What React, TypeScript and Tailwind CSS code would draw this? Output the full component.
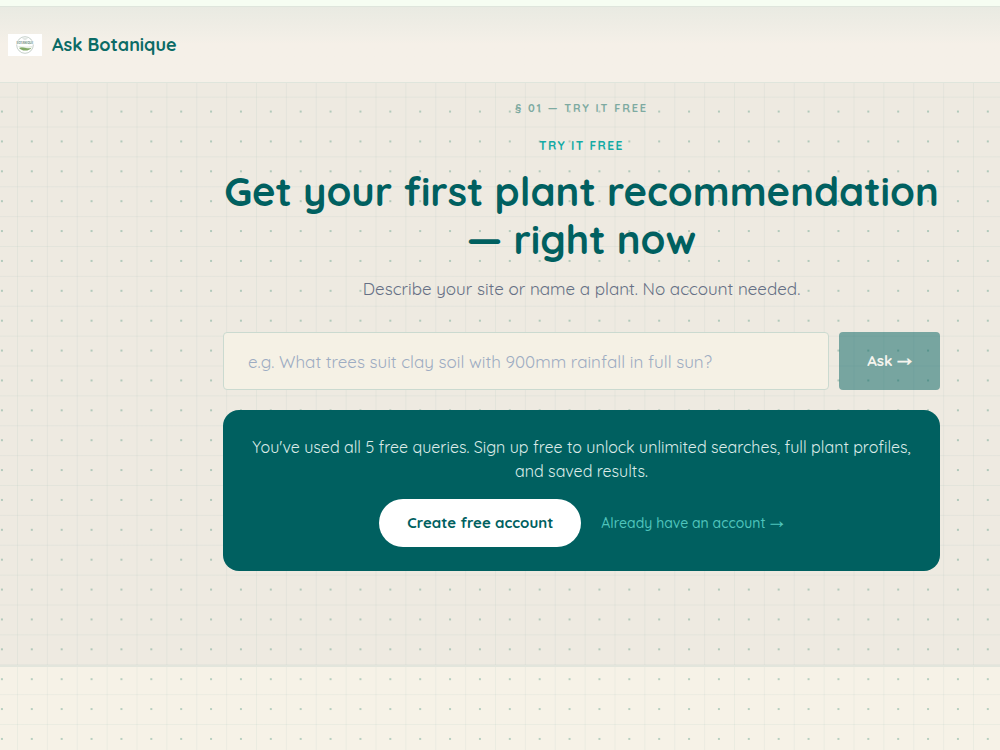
import React from "react";

function Logo() {
  return (
    <svg className="h-[22px] w-[34px] shrink-0" viewBox="0 0 34 22" role="img" aria-label="Botanique logo">
      <rect width="34" height="22" fill="#ffffff" />
      <circle cx="17" cy="11" r="8.3" fill="none" stroke="#9fb0a6" strokeWidth="0.6" />
      <rect x="8" y="6.8" width="18" height="3.6" fill="#ffffff" />
      <text x="17" y="9.7" textAnchor="middle" fontSize="2.9" fontWeight="700" fill="#75918a" fontFamily="Inter, sans-serif">
        BOTANIQUE
      </text>
      <path d="M14.5 4.4h5M15.5 5.6h3" stroke="#c0cbc5" strokeWidth="0.5" />
      <path d="M11 14c2.500-1.200 5-.4 7 .1 2 .4 4 .2 5.600-.3-1.300 2-3.800 2.900-6.600 2.800-2.500-.1-4.700-1-6-2.600z" fill="#83aa68" />
      <path d="M10.500 12.600c4 .7 8.500.8 13.500.1" fill="none" stroke="#b8cdb0" strokeWidth="0.5" />
    </svg>
  );
}

function Header() {
  return (
    <header className="flex h-[77px] items-center gap-[10px] border-y border-[#dfe5dc] bg-linear-to-b from-[#e9eae2] to-[#f5f0e8] to-50% px-2">
      <Logo />
      <a href="#home" className="text-[18px] leading-6 font-bold text-[#0b6b66]">
        Ask Botanique
      </a>
    </header>
  );
}

function AskForm() {
  return (
    <form className="mt-[31px] flex gap-[10px]" onSubmit={(e) => e.preventDefault()}>
      <input
        type="text"
        aria-label="Your question"
        placeholder="e.g. What trees suit clay soil with 900mm rainfall in full sun?"
        className="h-[58px] min-w-0 flex-1 rounded-[4px] border border-[#cbdad0] bg-[#f5f1e5] px-6 text-[17px] text-[#334155] outline-none placeholder:text-[#9dacc2]"
      />
      <button
        type="submit"
        disabled
        className="w-[101px] rounded-[4px] bg-[#006060]/50 text-[15px] font-bold text-[#f5f4ee]"
      >
        Ask →
      </button>
    </form>
  );
}

function LimitPanel() {
  return (
    <section className="mt-5 rounded-2xl bg-[#006060] px-6 pt-[25px] pb-6 text-center">
      <p className="text-[16px] leading-6 text-[#dcebe8]">
        You've used all 5 free queries. Sign up free to unlock unlimited searches, full plant profiles, and saved results.
      </p>
      <div className="mt-4 flex items-center justify-center gap-5">
        <a
          href="#signup"
          className="flex h-12 items-center rounded-full bg-white px-7 text-[15px] font-bold text-[#006060]"
        >
          Create free account
        </a>
        <a href="#login" className="text-[14px] font-medium text-[#4fc4bc]">
          Already have an account →
        </a>
      </div>
    </section>
  );
}

export default function App() {
  return (
    <div className="min-h-screen bg-[#f6f2e7] bg-[radial-gradient(circle,rgba(60,140,115,0.34)_1px,transparent_1.5px),linear-gradient(to_right,rgba(0,96,96,0.045)_1px,transparent_1px),linear-gradient(to_bottom,rgba(0,96,96,0.045)_1px,transparent_1px)] [background-size:2.988vw_2.988vw] [background-position:-13px_7px,17px_7px,17px_7px] font-[Quicksand,'Noto_Sans_Math','Noto_Sans_CJK_JP',sans-serif]">
      <div className="h-[6px] bg-[#f6fdf2]" />
      <Header />
      <main className="border-b-2 border-[#e2e5dc] bg-[rgba(75,72,100,0.045)] pr-[60px] pb-[94px] pl-6">
        <div className="ml-auto w-full max-w-[717px] pt-[17px] text-center">
          <p className="text-[11px] leading-4 font-bold tracking-[0.17em] text-[#7eaaa1]">§ 01 — TRY IT FREE</p>
          <p className="mt-[22px] text-[12px] leading-4 font-bold tracking-[0.12em] text-[#14aaa5]">TRY IT FREE</p>
          <h1 className="mt-[13px] text-[40px] leading-[48px] font-bold text-[#006060]">
            Get your first plant recommendation — right now
          </h1>
          <p className="mt-[14px] text-[17px] leading-6 text-[#667085]">
            Describe your site or name a plant. No account needed.
          </p>
          <AskForm />
          <LimitPanel />
        </div>
      </main>
    </div>
  );
}
